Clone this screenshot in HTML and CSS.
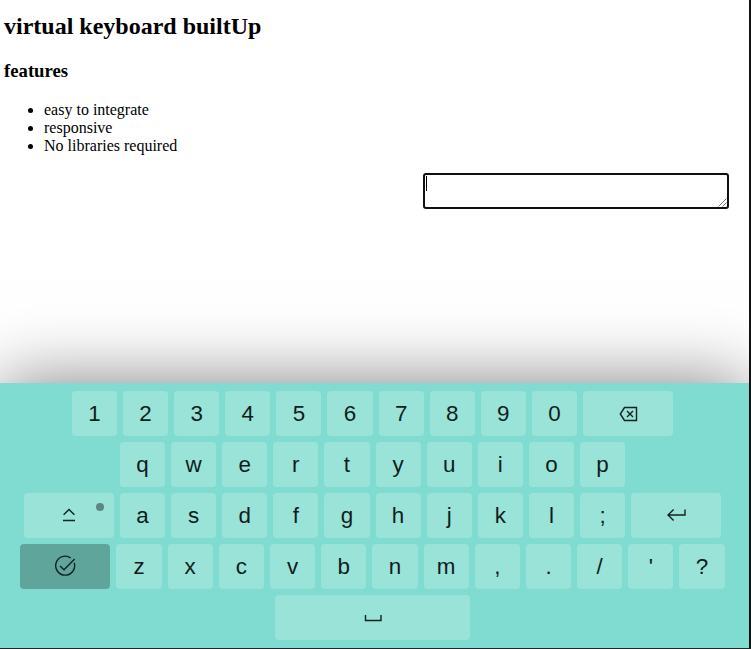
FILE: index.html
```
<!DOCTYPE html>
<html lang="en">
<head>
<meta charset="utf-8">
<title>virtual keyboard</title>
<link rel="stylesheet" href="styles.css">
</head>
<body>
<div class="page">
<main class="content">
<h2 class="title">virtual keyboard builtUp</h2>
<h3 class="subtitle">features</h3>
<ul class="features"><li>easy to integrate</li><li>responsive</li><li>No libraries required</li></ul>
<div class="field"><span class="caret"></span>
<svg class="grip" width="9" height="9" viewBox="0 0 9 9"><path d="M0.5 8.5l8-8M4.5 8.5l4-4"/></svg></div>
</main>
<section class="keyboard">
<div class="row"><button class="key">1</button><button class="key">2</button><button class="key">3</button><button class="key">4</button><button class="key">5</button><button class="key">6</button><button class="key">7</button><button class="key">8</button><button class="key">9</button><button class="key">0</button><button class="key wide"><svg width="22" height="22" viewBox="0 0 22 22"><path d="M7.5 5.5h12v13h-12L3.3 12zM10 9l6 6M16 9l-6 6"/></svg></button></div>
<div class="row"><button class="key">q</button><button class="key">w</button><button class="key">e</button><button class="key">r</button><button class="key">t</button><button class="key">y</button><button class="key">u</button><button class="key">i</button><button class="key">o</button><button class="key">p</button></div>
<div class="row"><button class="key wide caps"><svg width="22" height="22" viewBox="0 0 22 22"><path d="M5.6 10.8L11 5.4l5.4 5.4M5 16.5h12"/></svg></button><button class="key">a</button><button class="key">s</button><button class="key">d</button><button class="key">f</button><button class="key">g</button><button class="key">h</button><button class="key">j</button><button class="key">k</button><button class="key">l</button><button class="key">;</button><button class="key wide"><svg width="22" height="22" viewBox="0 0 22 22"><path d="M20 5.5V11H3.6M8.6 5.4L3 11l5.6 5.6"/></svg></button></div>
<div class="row last"><button class="key wide dark"><svg width="22" height="22" viewBox="0 0 22 22"><path d="M16.8 3A9.5 9.5 0 1 0 20.2 7.7M6 11l4 3.7L20.7 4"/></svg></button><button class="key">z</button><button class="key">x</button><button class="key">c</button><button class="key">v</button><button class="key">b</button><button class="key">n</button><button class="key">m</button><button class="key">,</button><button class="key">.</button><button class="key">/</button><button class="key">'</button><button class="key">?</button></div>
<div class="row"><button class="key space"><svg width="22" height="22" viewBox="0 0 22 22"><path d="M3.5 9v5.5H19V9"/></svg></button></div>
</section>
</div>
</body>
</html>
```
FILE: styles.css
```
* { box-sizing: border-box; }
body { margin: 0; background: #fff; }
.page {
  width: 751px;
  height: 649px;
  display: flex;
  flex-direction: column;
  border-right: 2px solid #111;
  border-bottom: 1px solid #252525;
  overflow: hidden;
}
.content {
  height: 383px;
  flex: none;
  padding: 13px 20px 0 4px;
  color: #000;
  font-family: "Liberation Serif", serif;
  font-size: 16px;
}
.title { margin: 0; font-size: 24px; line-height: 27px; }
.subtitle { margin: 20px 0 19px; font-size: 18.72px; line-height: 22px; }
.features { margin: 0; padding-left: 40px; line-height: 18px; }
.field {
  width: 306px;
  height: 36px;
  margin: 18px 0 0 auto;
  padding: 1px;
  border: 2px solid #101010;
  border-radius: 3px;
  position: relative;
}
.caret { display: block; width: 1px; height: 15px; background: #000; }
.grip { position: absolute; right: 0; bottom: 0; fill: none; stroke: #555; stroke-width: 0.8; }
.keyboard {
  height: 265px;
  flex: none;
  display: flex;
  flex-direction: column;
  gap: 6px;
  padding: 8px 4px 0 0;
  background: #80dcd0;
  box-shadow: 0 0 68px rgba(0, 0, 0, 0.5);
}
.row { display: flex; justify-content: center; gap: 6px; }
.key {
  width: 45.12px;
  height: 45px;
  flex: none;
  display: flex;
  align-items: center;
  justify-content: center;
  position: relative;
  margin: 0;
  padding: 0;
  border: 0;
  border-radius: 4px;
  background: #99e3d9;
  color: #111d1b;
  font: 22.4px "Liberation Sans", Arial, sans-serif;
}
.last .key { width: 45.2px; }
.wide, .last .wide { width: 90.1px; }
.space { width: 195px; }
.dark { background: #60a59c; }
.key svg { margin-bottom: 1px; fill: none; stroke: #15211f; stroke-width: 1.4; }
.caps::after {
  content: "";
  position: absolute;
  top: 10px;
  right: 10px;
  width: 8px;
  height: 8px;
  border-radius: 50%;
  background: #5c8882;
}
```
